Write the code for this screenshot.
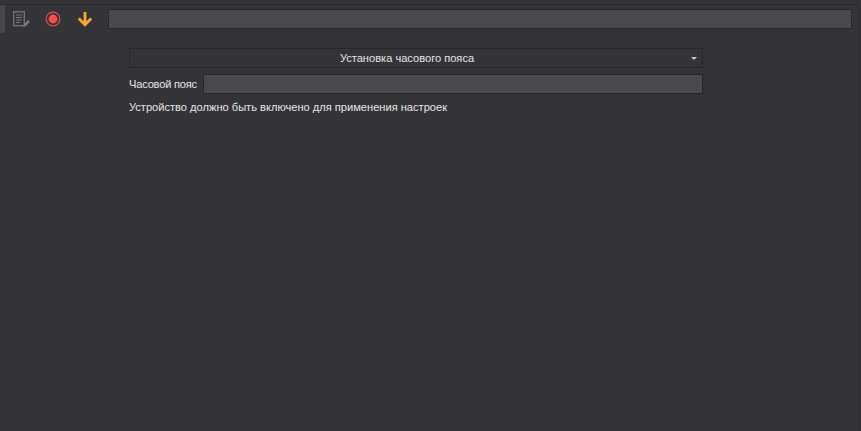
<div class="page">
  <div class="toolbar">
    <div class="tab">
      <svg width="18" height="18" viewBox="0 0 18 18" fill="none">
        <path d="M1.700 1.700h10.600v14h-10.600z" stroke="#6f6f74" stroke-width="1.400"/>
        <path d="M4 5h6M4 7.500h6M4 10h6M4 12.500h4" stroke="#77777c" stroke-width="1.200"/>
        <path d="M11.500 17l.8-3 3.700-4 2 1.600-3.500 4.200z" fill="#77777c"/>
      </svg>
    </div>
    <div class="tool">
      <svg width="16" height="16" viewBox="0 0 16 16">
        <circle cx="8" cy="8" r="6.800" fill="none" stroke="#d9504d" stroke-width="1.200"/>
        <circle cx="8" cy="8" r="4.400" fill="#f4504c"/>
      </svg>
    </div>
    <div class="tool">
      <svg width="16" height="16" viewBox="0 0 16 16" fill="none">
        <path d="M8 1v12.500M1.800 7.500l6.200 6.200 6.200-6.200" stroke="#f5ab35" stroke-width="2.800"/>
      </svg>
    </div>
    <input class="field top" type="text" />
  </div>
  <div class="form">
    <div class="select">
      <span>Установка часового пояса</span>
      <i class="caret"></i>
    </div>
    <div class="row">
      <label for="tz">Часовой пояс</label>
      <input id="tz" class="field" type="text" />
    </div>
    <p>Устройство должно быть включено для применения настроек</p>
  </div>
</div>

<style>
  :global(body) {
    margin: 0;
    background: #333338;
  }
  .page {
    height: 427px;
    margin: 4px 1px 0 0;
    box-sizing: border-box;
    border-top: 1px solid #2a2a2e;
    border-right: 1px solid #2a2a2e;
    font-family: "Liberation Sans", Arial, sans-serif;
    font-size: 11.1px;
    color: #e6e6e6;
    overflow: hidden;
  }
  .toolbar {
    display: flex;
    align-items: center;
    height: 28px;
    padding-right: 7px;
    box-sizing: border-box;
  }
  .tab {
    width: 37px;
    height: 28px;
    display: flex;
    align-items: center;
    justify-content: center;
    box-sizing: border-box;
    border-left: 5px solid #47474c;
  }
  .tool {
    width: 32px;
    height: 28px;
    display: flex;
    align-items: center;
    justify-content: center;
  }
  .field {
    flex: 1;
    height: 20px;
    box-sizing: border-box;
    background: #48484d;
    border: 1px solid #27272b;
    padding: 0;
    margin: 0;
    min-width: 0;
  }
  .top {
    margin-left: 7px;
  }
  .form {
    width: 574px;
    margin: 15px 0 0 129px;
  }
  .select {
    position: relative;
    height: 20px;
    box-sizing: border-box;
    border: 1px solid #27272b;
    padding-right: 18px;
    display: flex;
    align-items: center;
    justify-content: center;
  }
  .caret {
    position: absolute;
    right: 5px;
    top: 8px;
    border-left: 3px solid transparent;
    border-right: 3px solid transparent;
    border-top: 3px solid #c4c4c4;
  }
  .row {
    display: flex;
    align-items: center;
    margin-top: 6px;
  }
  label {
    flex: none;
    width: 74px;
    letter-spacing: -0.2px;
    white-space: nowrap;
  }
  p {
    margin: 7px 0 0;
  }
</style>
